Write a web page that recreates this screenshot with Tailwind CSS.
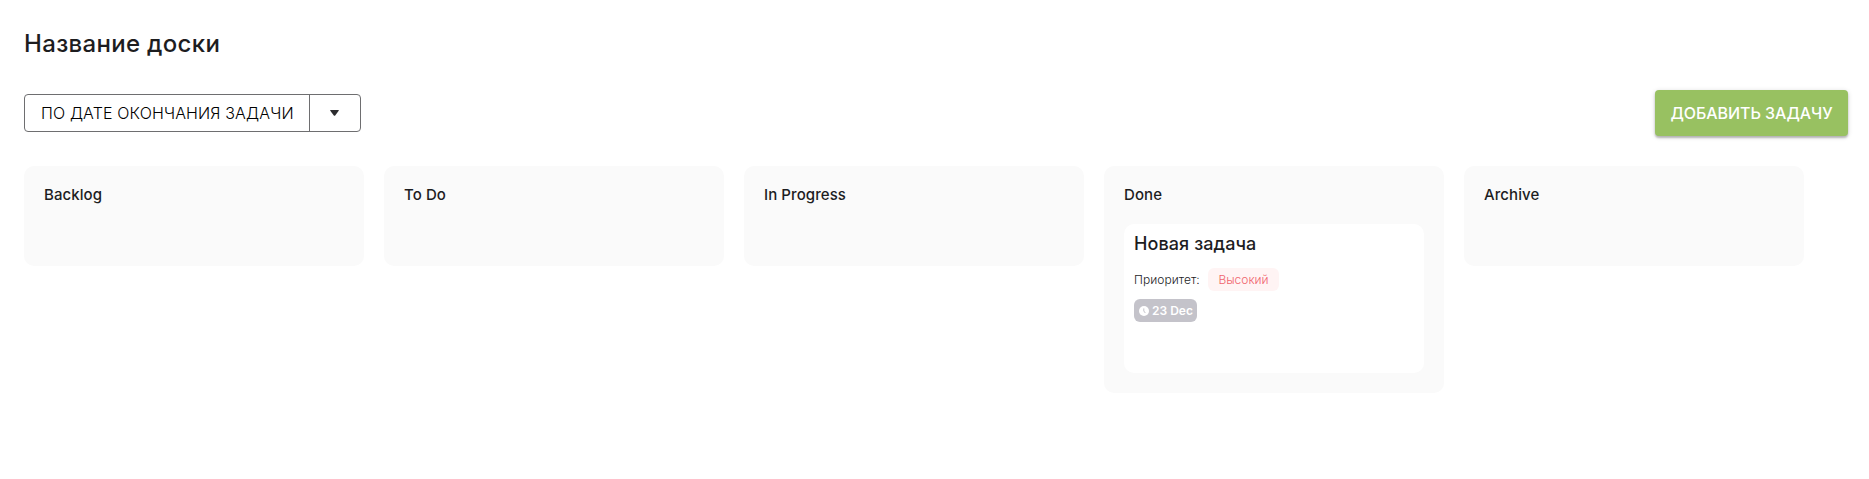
<!DOCTYPE html>
<html lang="ru">
<head>
<meta charset="utf-8">
<title>Название доски</title>
<script src="https://cdn.jsdelivr.net/npm/@tailwindcss/browser@4"></script>
</head>
<body class="bg-white text-[#1d1d1f] font-['Inter',sans-serif]">
<main class="h-[479px] overflow-hidden px-6 pt-7">
  <h1 class="text-2xl leading-8 font-medium tracking-[0.32px]">Название доски</h1>
  <div class="mt-[30px] mr-[-3px] flex h-[46px] items-center justify-between">
    <div class="flex h-[38px] w-[337px] rounded border border-[#6e6e70] text-black">
      <div class="flex w-[285px] items-center border-r border-[#6e6e70] pl-4 text-base font-light tracking-[0.14px] whitespace-nowrap">ПО ДАТЕ ОКОНЧАНИЯ ЗАДАЧИ</div>
      <div class="flex flex-1 items-center justify-center pr-px">
        <svg class="h-[6px] w-[9px]" viewBox="0 0 9 6" fill="#2c2c2e"><path d="M.6 0h7.8q.8 0 .3.7L5.2 5.4q-.7.8-1.4 0L.3.7Q-.2 0 .6 0Z"/></svg>
      </div>
    </div>
    <button class="flex h-[46px] w-[193px] items-center justify-center rounded bg-[#98c161] text-base font-medium tracking-[-0.05px] whitespace-nowrap text-white shadow-[0_2px_2px_rgba(0,0,0,0.22),0_1px_5px_rgba(0,0,0,0.16)]">ДОБАВИТЬ ЗАДАЧУ</button>
  </div>
  <div class="mt-[30px] flex items-start gap-5 text-[15px] leading-[18px] font-medium">
    <section class="h-[100px] w-[340px] shrink-0 rounded-[10px] bg-[#fafafa] p-5"><h2 class="tracking-[0.08px]">Backlog</h2></section>
    <section class="h-[100px] w-[340px] shrink-0 rounded-[10px] bg-[#fafafa] p-5"><h2 class="tracking-[0.08px]">To Do</h2></section>
    <section class="h-[100px] w-[340px] shrink-0 rounded-[10px] bg-[#fafafa] p-5"><h2 class="tracking-[0.08px]">In Progress</h2></section>
    <section class="h-[227px] w-[340px] shrink-0 rounded-[10px] bg-[#fafafa] p-5">
      <h2 class="tracking-[0.08px]">Done</h2>
      <article class="mt-5 h-[149px] rounded-[10px] bg-white px-[10px] pt-2">
        <h3 class="text-lg leading-6 tracking-[0.08px]">Новая задача</h3>
        <div class="mt-3 flex h-[23px] items-center text-xs font-light">
          <span class="w-[74px] tracking-[0.05px]">Приоритет:</span>
          <span class="flex h-[23px] w-[71px] items-center justify-center rounded-md bg-[#fff4f4] text-[#f0646d]">Высокий</span>
        </div>
        <div class="mt-2 flex h-[23px] w-[63px] items-center gap-[3px] rounded-md bg-[#c4c3ca] pl-[5px] text-xs font-semibold whitespace-nowrap text-white">
          <svg class="size-[10px] shrink-0" viewBox="0 0 10 10"><circle cx="5" cy="5" r="5" fill="#fff"/><path d="M4.8 2.4V5L6.3 7" fill="none" stroke="#c4c3ca" stroke-width="1"/></svg>
          <span>23 Dec</span>
        </div>
      </article>
    </section>
    <section class="h-[100px] w-[340px] shrink-0 rounded-[10px] bg-[#fafafa] p-5"><h2 class="tracking-[0.08px]">Archive</h2></section>
  </div>
</main>
</body>
</html>
